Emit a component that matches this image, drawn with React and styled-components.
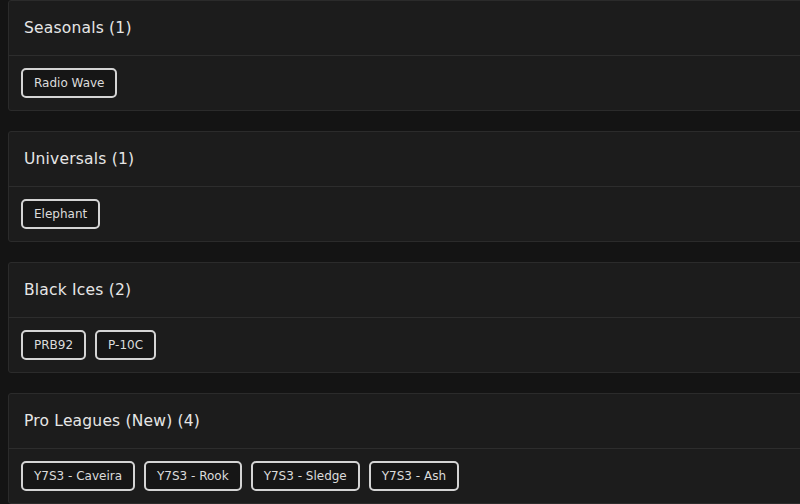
import React from 'react';
import styled, { createGlobalStyle } from 'styled-components';

const GlobalStyle = createGlobalStyle`
    html, body {
        margin: 0;
        padding: 0;
        background: #141414;
        overflow: hidden;
    }
    body {
        font-family: "DejaVu Sans", "Noto Sans", sans-serif;
    }
`;

const Page = styled.div`
    display: flex;
    flex-direction: column;
    gap: 20px;
    padding-left: 8px;
    width: 820px;
`;

const Card = styled.section`
    background: #1c1c1c;
    border: 1px solid #2b2b2b;
    border-radius: 3px;
`;

const CardHeader = styled.div`
    height: 54px;
    display: flex;
    align-items: center;
    padding-left: 15px;
    border-bottom: 1px solid #2d2d2d;
    color: #e6e6e6;
    font-size: 15.5px;
    font-weight: 500;
    letter-spacing: 0.2px;
`;

const CardBody = styled.div`
    display: flex;
    flex-wrap: wrap;
    gap: 9px;
    padding: 12px;
`;

const Tag = styled.button`
    height: 30px;
    padding: 0 11px;
    background: #161616;
    border: 2px solid #d4d4d4;
    border-radius: 5px;
    color: #dcdcdc;
    font-family: inherit;
    font-size: 12px;
    cursor: pointer;
`;

const groups = [
    { title: 'Seasonals', items: ['Radio Wave'] },
    { title: 'Universals', items: ['Elephant'] },
    { title: 'Black Ices', items: ['PRB92', 'P-10C'] },
    { title: 'Pro Leagues (New)', items: ['Y7S3 - Caveira', 'Y7S3 - Rook', 'Y7S3 - Sledge', 'Y7S3 - Ash'] },
];

export default function App() {
    return (
        <>
            <GlobalStyle />
            <Page>
                {groups.map(group => (
                    <Card key={group.title}>
                        <CardHeader>{group.title} ({group.items.length})</CardHeader>
                        <CardBody>
                            {group.items.map(item => <Tag key={item}>{item}</Tag>)}
                        </CardBody>
                    </Card>
                ))}
            </Page>
        </>
    );
}
